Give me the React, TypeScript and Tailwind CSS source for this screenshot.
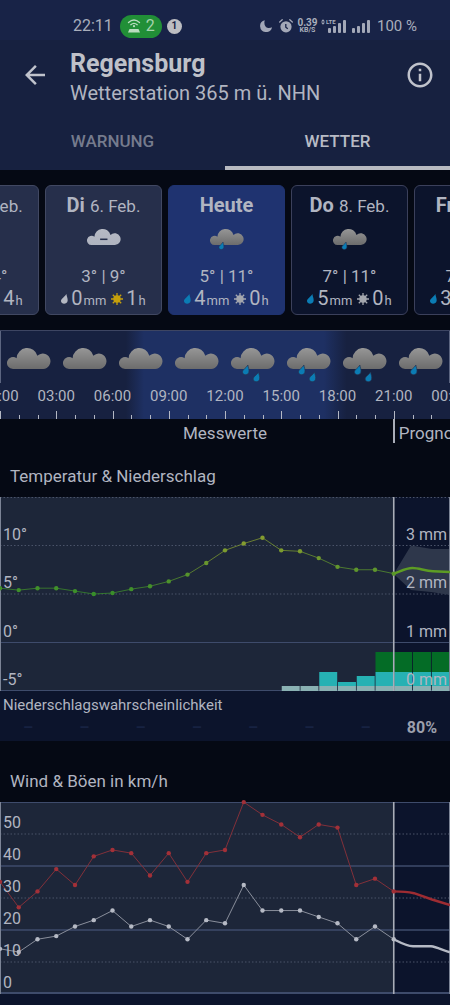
import { useId } from "react";
import { MdArrowBack, MdInfoOutline } from "react-icons/md";

const TEMPERATURES = [5.6, 5.4, 5.6, 5.6, 5.3, 5, 5.1, 5.5, 5.8, 6.3, 7, 8.2, 9.5, 10.2, 10.8, 9.5, 9.4, 8.7, 7.8, 7.5, 7.5, 7.1];
const GUSTS = [35, 27, 32, 39, 34, 43, 45, 44, 37, 44, 35, 44, 45, 60, 56, 53, 49, 53, 52, 34, 36, 32];
const WINDS = [14, 13, 17, 18, 21, 23, 26, 21, 23, 21, 17, 23, 22, 34, 26, 26, 26, 24, 22, 17, 21, 17];

const CHART_WIDTH = 450;
const HOUR = CHART_WIDTH / 24;
const NOW = 21 * HOUR;

const tempY = (value: number) => 145.5 - value * 9.7;
const windY = (value: number) => 191.5 - value * 3.19;

const linePoints = (values: number[], scale: (value: number) => number) =>
  values.map((value, hour) => `${hour * HOUR},${scale(value)}`).join(" ");

type Sky = "plain" | "one" | "two" | "fog" | "none";

function Drop({ x, y }: { x: number; y: number }) {
  return (
    <path
      transform={`translate(${x} ${y})`}
      d="M5.4 0C5.6 2.6 7 4.4 6.4 7.2 5.8 10.4.3 10.6 0 7.2-.2 4.6 3.6 3.2 5.4 0Z"
      fill="#0b7cb4"
      stroke="#273352"
      strokeWidth="0.7"
    />
  );
}

function CloudIcon({ sky, className }: { sky: Sky; className: string }) {
  const id = useId();
  return (
    <svg viewBox="0 0 44 36" className={className} aria-hidden="true">
      <defs>
        <linearGradient id={id} x1="0" y1="0" x2="0" y2="1">
          <stop offset="0" stopColor={sky === "fog" ? "#b6bac4" : "#969696"} />
          <stop offset="1" stopColor={sky === "fog" ? "#aeb3bf" : "#6c6c6c"} />
        </linearGradient>
      </defs>
      {sky !== "none" && (
        <path
          d="M6 22A6 6 0 1 1 9.6 11.2 10.6 10.6 0 0 1 30.4 8.8 7.7 7.7 0 1 1 36.2 22Z"
          fill={`url(#${id})`}
        />
      )}
      {sky === "fog" && <path d="M17 14.5h9.5" stroke="#26304c" strokeWidth="2" />}
      {(sky === "one" || sky === "two") && <Drop x={11.5} y={18} />}
      {sky === "two" && <Drop x={22.2} y={25} />}
    </svg>
  );
}

function SmallDrop({ color }: { color: string }) {
  return (
    <svg viewBox="0 0 7 10" className="h-[10px] w-[7px]" aria-hidden="true">
      <path d="M5.4 0C5.6 2.6 7 4.4 6.6 7 6 10.4.3 10.6 0 7.2-.2 4.6 3.6 3.2 5.4 0Z" fill={color} />
    </svg>
  );
}

function SmallSun({ color }: { color: string }) {
  return (
    <svg viewBox="0 0 12 12" className="h-[12px] w-[12px]" aria-hidden="true">
      <circle cx="6" cy="6" r="3.7" fill={color} />
      <path
        d="M6 0V12M0 6H12M1.8 1.8L10.2 10.2M10.2 1.8L1.8 10.2"
        stroke={color}
        strokeWidth="1.3"
      />
    </svg>
  );
}

type Day = {
  name: string;
  date: string;
  sky: Sky;
  temps: string;
  rain: string;
  sun: string;
  rainColor: string;
  sunColor: string;
  look: string;
};

const PAST = "border-[#414862] bg-[#262f4b]";
const TODAY = "border-[#1f3370] bg-[#1f3370]";
const FUTURE = "border-[#3b405b] bg-[#0c142c]";

const DAYS: Day[] = [
  { name: "Mo", date: "5. Feb.", sky: "none", temps: "2° | 14°", rain: "0", sun: "4", rainColor: "#b4b8c2", sunColor: "#c8a010", look: PAST },
  { name: "Di", date: "6. Feb.", sky: "fog", temps: "3° | 9°", rain: "0", sun: "1", rainColor: "#b4b8c2", sunColor: "#c6a00c", look: PAST },
  { name: "Heute", date: "", sky: "one", temps: "5° | 11°", rain: "4", sun: "0", rainColor: "#0b7cb4", sunColor: "#a4a7ae", look: TODAY },
  { name: "Do", date: "8. Feb.", sky: "one", temps: "7° | 11°", rain: "5", sun: "0", rainColor: "#0b7cb4", sunColor: "#a4a7ae", look: FUTURE },
  { name: "Fr", date: "9. Feb.", sky: "none", temps: "7° | 12°", rain: "3", sun: "2", rainColor: "#0b7cb4", sunColor: "#a4a7ae", look: FUTURE },
];

function DayCard({ day }: { day: Day }) {
  return (
    <button
      type="button"
      className={`flex h-[130px] w-[117px] shrink-0 flex-col items-center rounded-md border pt-[7px] whitespace-nowrap ${day.look}`}
    >
      <span className="flex h-6 items-baseline gap-[5px] leading-6">
        <span className="text-[20px] font-bold">{day.name}</span>
        {day.date && <span className="text-[17px]">{day.date}</span>}
      </span>
      <CloudIcon sky={day.sky} className="mt-[11px] h-[28px] w-[34px]" />
      <span className="mt-[9px] h-[22px] text-[17px] leading-[22px]">{day.temps}</span>
      <span className="flex h-6 items-center leading-6">
        <SmallDrop color={day.rainColor} />
        <span className="ml-[3px] text-[20px]">
          {day.rain}
          <span className="ml-px text-[13px]">mm</span>
        </span>
        <span className="ml-[5px]">
          <SmallSun color={day.sunColor} />
        </span>
        <span className="ml-[3px] text-[20px]">
          {day.sun}
          <span className="ml-px text-[13px]">h</span>
        </span>
      </span>
    </button>
  );
}

function SignalBars({ className }: { className: string }) {
  return (
    <svg viewBox="0 0 18 13" className={className} fill="#a3a8b8" aria-hidden="true">
      <rect x="0" y="8" width="3" height="5" rx="1" />
      <rect x="5" y="6" width="3" height="7" rx="1" />
      <rect x="10" y="3" width="3" height="10" rx="1" />
      <rect x="15" y="0" width="3" height="13" rx="1" />
    </svg>
  );
}

function StatusBar() {
  return (
    <div className="flex h-10 items-center justify-between bg-[#182347] pt-3 pr-[33px] pl-[73px] text-[#a9aebc]">
      <div className="flex items-center">
        <span className="text-[16px] leading-5">22:11</span>
        <span className="ml-[7px] flex h-[23px] w-[42px] items-center justify-center gap-[5px] rounded-full bg-[#218f37]">
          <svg viewBox="0 0 14 14" className="h-[14px] w-[14px]" fill="none" stroke="#b9dcc0" strokeWidth="1.3" aria-hidden="true">
            <path d="M1.5 3.5Q7-1.5 12.5 3.5M3.8 5.7Q7 3 10.2 5.7" strokeLinecap="round" />
            <circle cx="7" cy="7.2" r="1.1" fill="#b9dcc0" stroke="none" />
            <path d="M2.5 10h9l1.5 3.5h-12z" fill="#b9dcc0" stroke="none" />
          </svg>
          <span className="text-[16px] leading-5 text-[#a5d3ae]">2</span>
        </span>
        <span className="ml-[5px] flex h-[15px] w-[15px] items-center justify-center rounded-full bg-[#bcbdc2] text-[10px] leading-3 font-bold text-[#182347]">
          1
        </span>
      </div>
      <div className="flex items-center">
        <svg viewBox="0 0 12 12" className="h-[12px] w-[12px]" aria-hidden="true">
          <path d="M4.8.2C3.6 3.5 5 7.6 8.2 7.9 9.7 8.1 11 7.7 12 7.2A6 6 0 1 1 4.8.2Z" fill="#a3a8b8" />
        </svg>
        <svg viewBox="0 0 14 14" className="ml-[7px] h-[14px] w-[14px]" aria-hidden="true">
          <circle cx="7" cy="7.8" r="5.6" fill="#a3a8b8" />
          <path d="M.7 3L3.2.8M13.3 3L10.8.8" stroke="#a3a8b8" strokeWidth="1.3" strokeLinecap="round" />
          <path d="M6.8 5V8.2L8.8 9.8" stroke="#182347" strokeWidth="1.3" fill="none" />
        </svg>
        <span className="ml-[4px] flex w-[21px] flex-col items-center font-bold">
          <span className="text-[10px] leading-[9px]">0.39</span>
          <span className="text-[7px] leading-[7px]">KB/S</span>
        </span>
        <span className="relative ml-[3px] flex h-[14px] w-[25px] items-end justify-end">
          <SignalBars className="h-[13px] w-[18px]" />
          <span className="absolute -top-px left-0 flex items-center gap-px bg-[#182347] text-[6px] leading-[7px] font-bold">
            <svg viewBox="0 0 4 6" className="h-[6px] w-[4px]" fill="#a3a8b8" aria-hidden="true">
              <path d="M0 2.5L2 .3 4 2.5ZM0 3.5H4L2 5.7Z" />
            </svg>
            LTE
          </span>
        </span>
        <SignalBars className="ml-[6px] h-[13px] w-[18px]" />
        <span className="ml-[7px] text-[15px] leading-5 whitespace-nowrap">100 %</span>
      </div>
    </div>
  );
}

function Header() {
  return (
    <header className="bg-[#172140]">
      <div className="flex h-[70px] items-center pr-[15px] pl-[20px]">
        <button type="button" aria-label="Zurück" className="text-[#c0c3cc]">
          <MdArrowBack className="h-[30px] w-[30px]" />
        </button>
        <div className="ml-5 flex-1 pt-[6px]">
          <h1 className="text-[25px] leading-[30px] font-bold text-[#bfc1c9]">Regensburg</h1>
          <p className="text-[20px] leading-[28px] text-[#b1b5c1]">Wetterstation 365 m ü. NHN</p>
        </div>
        <button type="button" aria-label="Info" className="text-[#c0c3cc]">
          <MdInfoOutline className="h-[30px] w-[30px]" />
        </button>
      </div>
      <nav className="grid h-[60px] grid-cols-2 text-[17px] leading-6 font-medium">
        <button type="button" className="border-b-4 border-transparent pt-[5px] text-[#757b8d]">
          WARNUNG
        </button>
        <button type="button" className="border-b-4 border-[#b8bac1] pt-[5px] text-[#b8bbc5]">
          WETTER
        </button>
      </nav>
    </header>
  );
}

const STRIP_SKY: Sky[] = ["plain", "plain", "plain", "plain", "two", "two", "two", "one"];
const STRIP_HOURS = ["00:00", "03:00", "06:00", "09:00", "12:00", "15:00", "18:00", "21:00", "00:00"];
const TICKS = Array.from({ length: 24 }, (_, hour) => hour);

function HourStrip() {
  return (
    <section>
      <div className="overflow-hidden border-t border-[#3d4562] bg-linear-to-r from-[#172140] from-28% via-[#1e3063] via-32% to-[#1e3063] to-72%">
        <div className="bg-linear-to-r from-transparent from-72% to-[#172140] to-77%">
          <div className="grid h-[52px] grid-cols-8 justify-items-center border-x border-[#5c6580] pt-[16px]">
            {STRIP_SKY.map((sky, index) => (
              <CloudIcon key={index} sky={sky} className="h-[36px] w-[44px]" />
            ))}
          </div>
          <div className="-ml-[6.25%] grid h-[28px] w-[112.5%] grid-cols-9 text-center text-[15px] leading-[27px]">
            {STRIP_HOURS.map((hour, index) => (
              <span key={index}>{hour}</span>
            ))}
          </div>
          <div className="flex h-[8px] items-end">
            {TICKS.map((hour) => (
              <span
                key={hour}
                className={`flex-1 border-l border-[#b4b8c4] ${hour % 3 === 0 ? "h-[8px]" : "h-[4px]"}`}
              />
            ))}
          </div>
        </div>
      </div>
      <div className="grid h-[24px] grid-cols-[1fr_6fr_1fr] text-[17px] leading-[28px] whitespace-nowrap">
        <span />
        <span className="text-center">Messwerte</span>
        <span className="-ml-px h-6 w-0 min-w-full border-l-2 border-[#a9adb8] pl-[4px]">Prognose</span>
      </div>
    </section>
  );
}

function GridLine({ y, dotted, width = 1 }: { y: number; dotted?: boolean; width?: number }) {
  return (
    <line
      x1="0"
      x2={CHART_WIDTH}
      y1={y}
      y2={y}
      stroke={dotted ? "#4a5369" : "#3e4b6b"}
      strokeWidth={width}
      strokeDasharray={dotted ? "1.5 2" : undefined}
    />
  );
}

function tempColor(value: number) {
  const share = Math.min(1, Math.max(0, (value - 5) / 5));
  return `rgb(${Math.round(56 + share * 76)}, ${Math.round(142 + share * 14)}, ${Math.round(42 + share * 6)})`;
}

const RAIN = [
  { hour: 15, light: 5, strong: 0, heavy: 0 },
  { hour: 16, light: 5, strong: 0, heavy: 0 },
  { hour: 17, light: 5, strong: 14, heavy: 0 },
  { hour: 18, light: 5, strong: 4, heavy: 0 },
  { hour: 19, light: 5, strong: 10, heavy: 0 },
  { hour: 20, light: 5, strong: 14, heavy: 20 },
  { hour: 21, light: 5, strong: 14, heavy: 20 },
  { hour: 22, light: 5, strong: 14, heavy: 20 },
  { hour: 23, light: 5, strong: 14, heavy: 20 },
];

function TemperatureChart() {
  return (
    <div className="relative h-[194px] bg-[#0c142c] text-[16px] leading-[22px]">
      <svg viewBox="0 0 450 194" preserveAspectRatio="none" className="block h-full w-full" aria-hidden="true">
        <rect width={NOW} height="194" fill="#1d2639" />
        <GridLine y={0.5} dotted />
        <GridLine y={48.5} dotted />
        <GridLine y={97} dotted />
        <GridLine y={145.5} />
        <GridLine y={193.5} />
        <path d="M393.75 77L411 48.5 432 52H450V98L431 95 411 93Z" fill="#2e374b" />
        {RAIN.map(({ hour, light, strong, heavy }) => {
          const x = hour * HOUR + 0.5;
          const width = HOUR - 0.8;
          return (
            <g key={hour}>
              <rect x={x} y={194 - light - strong - heavy} width={width} height={heavy} fill="#046c26" />
              <rect x={x} y={194 - light - strong} width={width} height={strong} fill="#26b1b3" />
              <rect x={x} y={194 - light} width={width} height={light} fill="#8ab1b3" />
            </g>
          );
        })}
        <path d="M.5 0V194M449.5 0V194" stroke="#7c8496" />
        <path d={`M${NOW} 0V194`} stroke="#a9adb8" strokeWidth="1.6" />
        {TEMPERATURES.slice(1).map((value, index) => (
          <line
            key={index}
            x1={index * HOUR}
            y1={tempY(TEMPERATURES[index])}
            x2={(index + 1) * HOUR}
            y2={tempY(value)}
            stroke={tempColor(value)}
            strokeOpacity="0.75"
          />
        ))}
        {TEMPERATURES.map((value, hour) => (
          <circle key={hour} cx={hour * HOUR} cy={tempY(value)} r="2.2" fill={tempColor(value)} />
        ))}
        <path d="M393.75 76.6C400 74.5 406 71 412.5 71S425 74 433 74.3L450 75" fill="none" stroke="#5d9c24" strokeWidth="2.4" />
      </svg>
      <div className="absolute inset-0 flex justify-between px-[3px]">
        <div className="flex flex-col">
          {["10°", "5°", "0°", "-5°"].map((label) => (
            <span key={label} className="flex flex-1 items-end">
              {label}
            </span>
          ))}
        </div>
        <div className="flex flex-col text-right">
          {["3 mm", "2 mm", "1 mm", "0 mm"].map((label) => (
            <span key={label} className="flex flex-1 items-end justify-end">
              {label}
            </span>
          ))}
        </div>
      </div>
    </div>
  );
}

function WindChart() {
  return (
    <div className="relative h-[192px] bg-[#0c142c] text-[16px] leading-[22px]">
      <svg viewBox="0 0 450 192" preserveAspectRatio="none" className="block h-full w-full overflow-visible" aria-hidden="true">
        <rect width={NOW} height="192" fill="#1d2639" />
        <GridLine y={0.5} />
        <GridLine y={32} dotted />
        <GridLine y={64} width={1.6} />
        <GridLine y={96} dotted />
        <GridLine y={128} width={1.6} />
        <GridLine y={160} dotted />
        <GridLine y={191} width={2} />
        <path d="M.5 0V192M449.5 0V192" stroke="#7c8496" />
        <path d={`M${NOW} 0V192`} stroke="#a9adb8" strokeWidth="1.6" />
        <polyline points={linePoints(GUSTS, windY)} fill="none" stroke="#82303a" />
        <polyline points={linePoints(WINDS, windY)} fill="none" stroke="#8a8f9c" />
        {GUSTS.map((value, hour) => (
          <circle key={hour} cx={hour * HOUR} cy={windY(value)} r="2.2" fill="#a23038" />
        ))}
        {WINDS.map((value, hour) => (
          <circle key={hour} cx={hour * HOUR} cy={windY(value)} r="2.2" fill="#b6bac5" />
        ))}
        <path d="M393.75 89.4C402 89.5 408 90 414 91.2L432 97.5 450 103" fill="none" stroke="#9e2c32" strokeWidth="2.4" />
        <path d="M393.75 137.3C401 141 407 144.2 413 144.3H431C437 145 443 148.5 450 150.3" fill="none" stroke="#b6bac5" strokeWidth="2.4" />
      </svg>
      <div className="absolute inset-0 flex flex-col pl-[3px]">
        {["50", "40", "30", "20", "10", "0"].map((label) => (
          <span key={label} className="flex flex-1 items-end">
            {label}
          </span>
        ))}
      </div>
    </div>
  );
}

const PROBABILITIES = ["–", "–", "–", "–", "–", "–", "–", "80%"];

export default function App() {
  return (
    <div className="min-h-screen overflow-x-hidden bg-[#050914] font-['Roboto',sans-serif] text-[#b1b5c1]">
      <StatusBar />
      <Header />
      <main>
        <div className="flex justify-center gap-[6px] overflow-hidden py-[15px] pl-[3px]">
          {DAYS.map((day) => (
            <DayCard key={day.name} day={day} />
          ))}
        </div>
        <HourStrip />
        <section>
          <h2 className="flex h-[54px] items-center pt-[11px] pl-[10px] text-[17px] leading-6">
            Temperatur &amp; Niederschlag
          </h2>
          <TemperatureChart />
          <div className="h-[50px] bg-[#0c142c]">
            <h3 className="pt-[3px] pl-[3px] text-[15px] leading-[22px]">Niederschlagswahrscheinlichkeit</h3>
            <div className="grid grid-cols-8 text-center text-[16px] leading-[24px] font-bold">
              {PROBABILITIES.map((value, index) => (
                <span key={index} className={value === "–" ? "text-[#172242]" : "text-[#9b9fac]"}>
                  {value}
                </span>
              ))}
            </div>
          </div>
        </section>
        <section>
          <h2 className="flex h-[61px] items-center pt-[18px] pl-[10px] text-[17px] leading-6">
            Wind &amp; Böen in km/h
          </h2>
          <WindChart />
          <div className="h-[11px] bg-[#0c142c]" />
        </section>
      </main>
    </div>
  );
}
